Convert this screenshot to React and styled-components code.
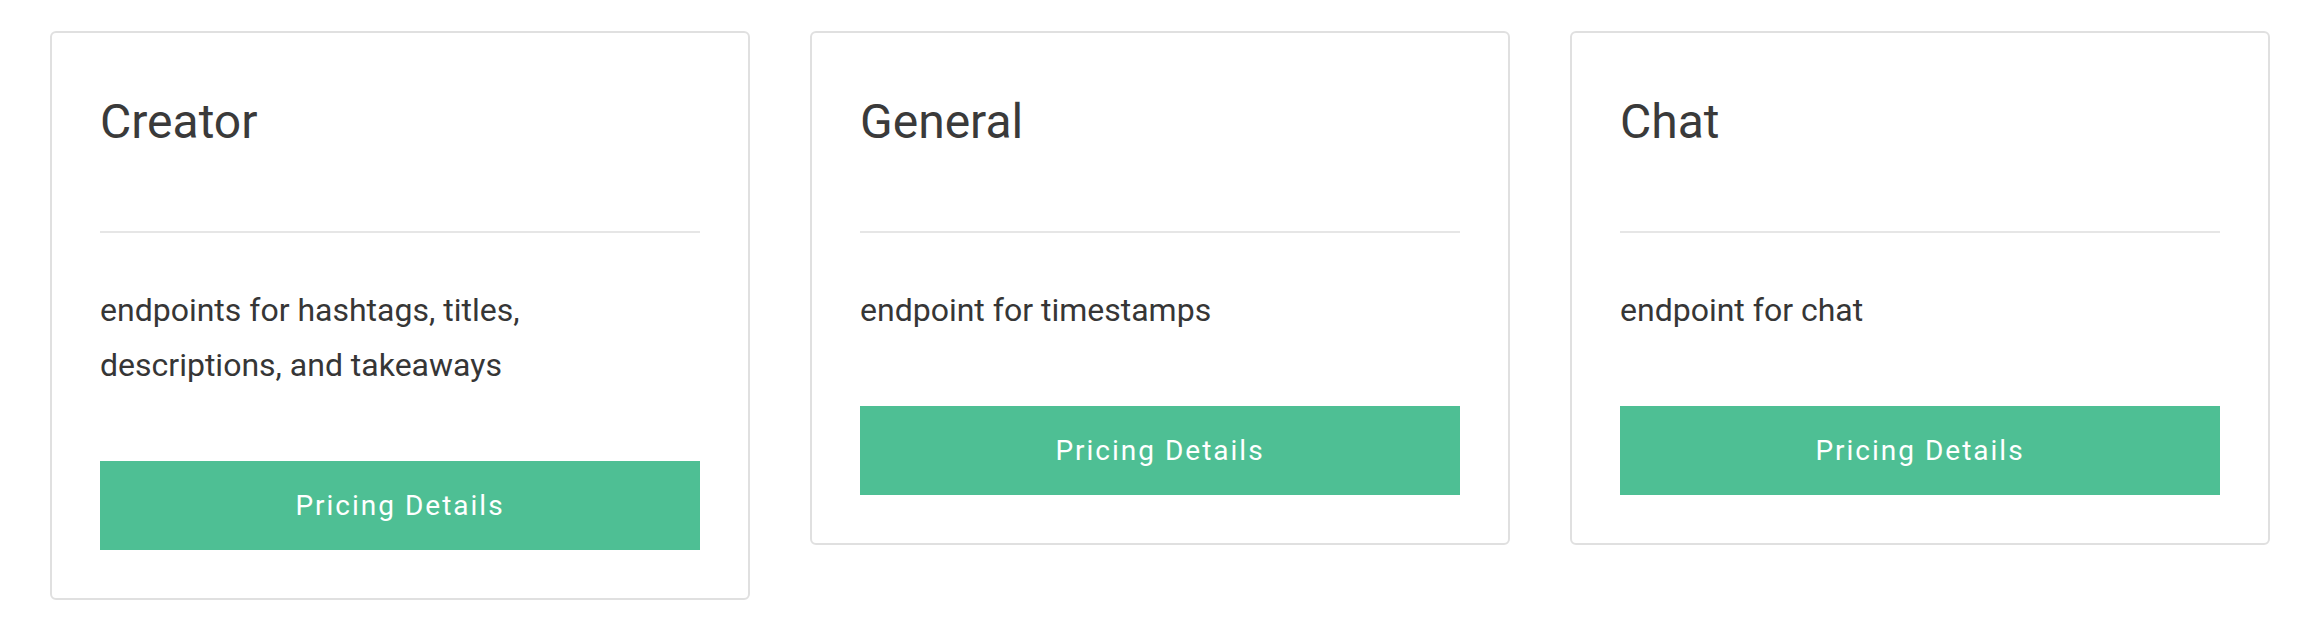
import React from "react";
import styled, { createGlobalStyle } from "styled-components";

const GlobalStyle = createGlobalStyle`
  html, body {
    margin: 0;
    padding: 0;
    background: #ffffff;
  }
  body {
    font-family: Roboto, "Liberation Sans", Arial, sans-serif;
    color: #363636;
  }
`;

const Page = styled.div`
  display: flex;
  align-items: flex-start;
  gap: 60px;
  padding: 31px 0 0 50px;
`;

const Card = styled.div`
  box-sizing: border-box;
  width: 700px;
  flex: 0 0 700px;
  border: 2px solid #e0e0e0;
  border-radius: 6px;
  background: #ffffff;
  padding: 48px 48px 48px 48px;
  display: flex;
  flex-direction: column;
`;

const Title = styled.h2`
  margin: 0;
  font-family: Roboto, "Liberation Sans", Arial, sans-serif;
  font-weight: 400;
  font-size: 48px;
  line-height: 82px;
  color: #3a3a3a;
`;

const Divider = styled.hr`
  margin: 68px 0 50px;
  border: none;
  height: 2px;
  background: #e6e6e6;
`;

const Description = styled.p`
  margin: 0 0 68px;
  font-size: 32px;
  line-height: 55px;
  color: #363636;
`;

const Button = styled.button`
  height: 89px;
  width: 100%;
  border: none;
  border-radius: 0;
  background: #4ebf94;
  color: #ffffff;
  font-family: Roboto, "Liberation Sans", Arial, sans-serif;
  font-size: 28px;
  letter-spacing: 2px;
  cursor: pointer;
  display: flex;
  align-items: center;
  justify-content: center;
  padding: 0;
`;

const plans = [
  { title: "Creator", text: "endpoints for hashtags, titles, descriptions, and takeaways" },
  { title: "General", text: "endpoint for timestamps" },
  { title: "Chat", text: "endpoint for chat" },
];

export default function App() {
  return (
    <>
      <GlobalStyle />
      <Page>
        {plans.map((p) => (
          <Card key={p.title}>
            <Title>{p.title}</Title>
            <Divider />
            <Description>{p.text}</Description>
            <Button>Pricing Details</Button>
          </Card>
        ))}
      </Page>
    </>
  );
}
